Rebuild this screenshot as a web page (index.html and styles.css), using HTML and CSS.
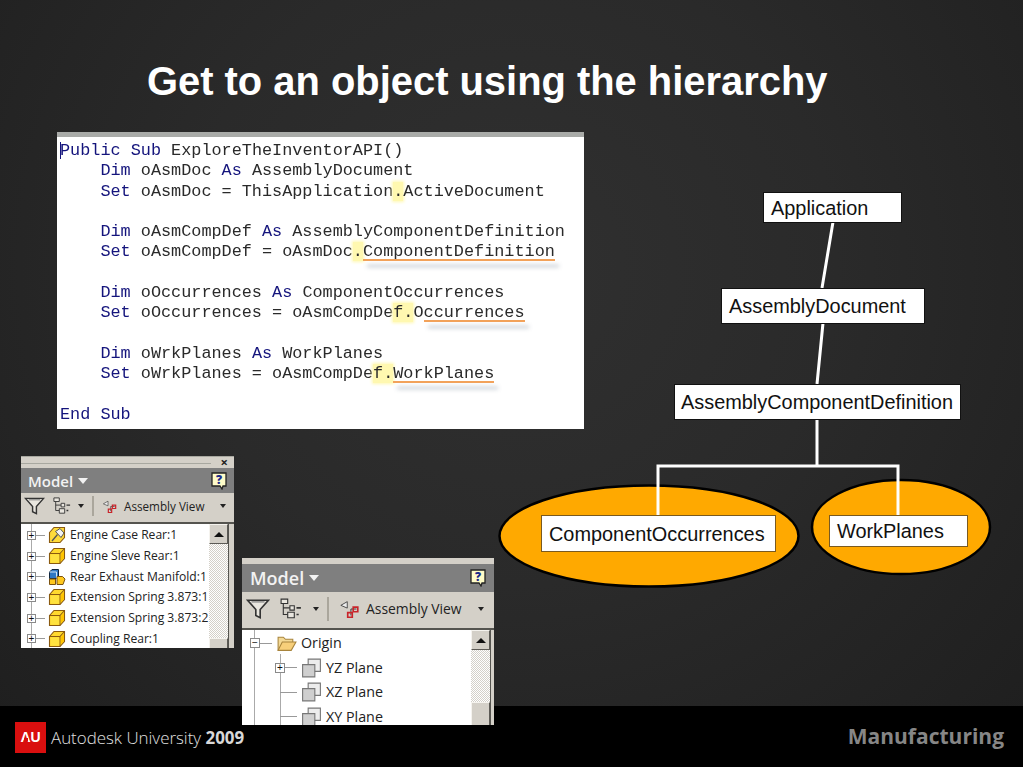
FILE: index.html

```html
<!DOCTYPE html>
<html lang="en">
<head>
    <meta charset="UTF-8">
    <meta name="viewport" content="width=device-width, initial-scale=1.0">
    <title>Get to an object using the hierarchy</title>
    <link rel="stylesheet" href="styles.css">
</head>
<body>
    <!-- Shared icons -->
    <svg class="icon-defs" width="0" height="0" aria-hidden="true">
        <symbol id="i-cube" viewBox="0 0 18 18">
            <path d="M1.500 6.500 6 1.500h10.500v10L12 16.500H1.500z" fill="#ffd92e" stroke="#8a5a10" stroke-width="1.100"/>
            <path d="M1.500 6.500H12v10M12 6.500l4.500-5" fill="none" stroke="#8a5a10" stroke-width="1.100"/>
            <path d="M2.500 7.500H11.200V15.600H2.500z" fill="#ffe23f"/>
            <path d="M12.800 7 16 3.400V11l-3.200 3.700z" fill="#ffc400"/>
        </symbol>
        <symbol id="i-pinned" viewBox="0 0 18 18">
            <path d="M1.500 6.500 6 1.500h10.500v10L12 16.500H1.500z" fill="#ffdb3a" stroke="#8a5a10" stroke-width="1.100"/>
            <path d="M4 15 9.500 8.500" stroke="#555" stroke-width="1.300"/>
            <path d="M7.500 5.500 12 2.500l4 4.500-3 4.500z" fill="#f2f2f2" stroke="#555" stroke-width="1"/>
        </symbol>
        <symbol id="i-assembly" viewBox="0 0 18 18">
            <path d="M1.500 4 4 1.500h6.500V8L8.500 10.500h-7z" fill="#2f78c4" stroke="#10263f"/>
            <path d="M1.500 4h7v6.500" fill="none" stroke="#cfe4f7"/>
            <path d="M1.500 11h6v5.500h-6zM9 8.500h5.500L17 11l-2 5.500H9z" fill="#ffc81e" stroke="#7a5210"/>
        </symbol>
        <symbol id="i-plane" viewBox="0 0 18 18">
            <path d="M6 1h11v11H6z" fill="#ececec" stroke="#777" stroke-width="1"/>
            <path d="M1 6h11v11H1z" fill="#cfcfcf" stroke="#777" stroke-width="1"/>
        </symbol>
        <symbol id="i-folder" viewBox="0 0 20 18">
            <path d="M2 16V3.500h5l2 2h7V8" fill="#f4d995" stroke="#a8843c"/>
            <path d="M2 16 6 8h13l-4.500 8z" fill="#f7cf7a" stroke="#a8843c"/>
        </symbol>
        <symbol id="i-funnel" viewBox="0 0 22 20">
            <path d="M1.500 2h19L13 10.500V18l-4-2v-5.500z" fill="#e9e6df" stroke="#333" stroke-width="1.500"/>
            <path d="M5 3.500h12" stroke="#888" stroke-width="1.200"/>
        </symbol>
        <symbol id="i-tree" viewBox="0 0 20 20">
            <path d="M3 5v10h4M3 9h6" fill="none" stroke="#333"/>
            <path d="M1 1h6v4H1zM9 7h4v4H9zM7 13h6v5H7z" fill="#e9e6df" stroke="#333"/>
            <path d="M15 9h4M15 15h2" stroke="#333" stroke-width="1.500"/>
        </symbol>
        <symbol id="i-view" viewBox="0 0 24 20">
            <path d="M9 2 2 6l7 3z" fill="#eee" stroke="#444"/>
            <path d="M13 10h6M13 10v7" fill="none" stroke="#333"/>
            <path d="M15.500 8h5v5h-5zM9.500 14h5v5h-5z" fill="none" stroke="#c9242a" stroke-width="1.800"/>
        </symbol>
        <symbol id="i-help" viewBox="0 0 16 18">
            <path d="M1 1h14v13h-3l-1 3-2-3H1z" fill="#fffcc8" stroke="#222" stroke-width="1.300"/>
        </symbol>
    </svg>

    <main class="slide">
        <h1 class="slide-title">Get to an object using the hierarchy</h1>

        <!-- VBA code window -->
        <section class="code-window">
            <div class="code-text">
                <div class="code-line"><span class="kw">Public Sub</span> ExploreTheInventorAPI()</div>
                <div class="code-line indent"><span class="kw">Dim</span> oAsmDoc <span class="kw">As</span> AssemblyDocument</div>
                <div class="code-line indent"><span class="kw">Set</span> oAsmDoc = ThisApplication<span class="hl">.</span>ActiveDocument</div>
                <div class="code-line"></div>
                <div class="code-line indent"><span class="kw">Dim</span> oAsmCompDef <span class="kw">As</span> AssemblyComponentDefinition</div>
                <div class="code-line indent"><span class="kw">Set</span> oAsmCompDef = oAsmDoc<span class="hl">.</span><span class="under">ComponentDefinition</span></div>
                <div class="code-line"></div>
                <div class="code-line indent"><span class="kw">Dim</span> oOccurrences <span class="kw">As</span> ComponentOccurrences</div>
                <div class="code-line indent"><span class="kw">Set</span> oOccurrences = oAsmCompDe<span class="hl">f.</span>O<span class="under">ccurrences</span></div>
                <div class="code-line"></div>
                <div class="code-line indent"><span class="kw">Dim</span> oWrkPlanes <span class="kw">As</span> WorkPlanes</div>
                <div class="code-line indent"><span class="kw">Set</span> oWrkPlanes = oAsmCompDe<span class="hl">f.</span><span class="under">WorkPlanes</span></div>
                <div class="code-line"></div>
                <div class="code-line"><span class="kw">End Sub</span></div>
            </div>
        </section>

        <!-- Model browser, small -->
        <section class="browser browser-small">
            <div class="browser-strip"><span class="browser-close">×</span></div>
            <div class="browser-head">
                <span class="browser-name">Model <i class="caret-white"></i></span>
                <span class="help"><svg><use href="#i-help"/></svg><b>?</b></span>
            </div>
            <div class="browser-tools">
                <svg class="tool-funnel"><use href="#i-funnel"/></svg>
                <svg class="tool-tree"><use href="#i-tree"/></svg>
                <i class="caret-dark"></i>
                <span class="tool-sep"></span>
                <svg class="tool-view"><use href="#i-view"/></svg>
                <span class="tool-label">Assembly View</span>
                <i class="caret-dark"></i>
            </div>
            <div class="browser-body">
                <ul class="tree">
                    <li><span class="exp">+</span><span class="dash"></span><svg class="node-icon"><use href="#i-pinned"/></svg>Engine Case Rear:1</li>
                    <li><span class="exp">+</span><span class="dash"></span><svg class="node-icon"><use href="#i-cube"/></svg>Engine Sleve Rear:1</li>
                    <li><span class="exp">+</span><span class="dash"></span><svg class="node-icon"><use href="#i-assembly"/></svg>Rear Exhaust Manifold:1</li>
                    <li><span class="exp">+</span><span class="dash"></span><svg class="node-icon"><use href="#i-cube"/></svg>Extension Spring 3.873:1</li>
                    <li><span class="exp">+</span><span class="dash"></span><svg class="node-icon"><use href="#i-cube"/></svg>Extension Spring 3.873:2</li>
                    <li><span class="exp">+</span><span class="dash"></span><svg class="node-icon"><use href="#i-cube"/></svg>Coupling Rear:1</li>
                </ul>
                <div class="scrollbar">
                    <span class="scroll-btn"><i class="arrow-up"></i></span>
                    <span class="scroll-track"></span>
                    <span class="scroll-thumb"></span>
                </div>
            </div>
        </section>

        <!-- Model browser, large -->
        <section class="browser browser-large">
            <div class="browser-head">
                <span class="browser-name">Model <i class="caret-white"></i></span>
                <span class="help"><svg><use href="#i-help"/></svg><b>?</b></span>
            </div>
            <div class="browser-tools">
                <svg class="tool-funnel"><use href="#i-funnel"/></svg>
                <svg class="tool-tree"><use href="#i-tree"/></svg>
                <i class="caret-dark"></i>
                <span class="tool-sep"></span>
                <svg class="tool-view"><use href="#i-view"/></svg>
                <span class="tool-label">Assembly View</span>
                <i class="caret-dark"></i>
            </div>
            <div class="browser-body">
                <ul class="tree">
                    <li><span class="exp">−</span><span class="dash"></span><svg class="node-icon"><use href="#i-folder"/></svg>Origin</li>
                    <li class="child"><span class="exp">+</span><span class="dash"></span><svg class="node-icon"><use href="#i-plane"/></svg>YZ Plane</li>
                    <li class="child leaf"><span class="dash"></span><svg class="node-icon"><use href="#i-plane"/></svg>XZ Plane</li>
                    <li class="child leaf"><span class="dash"></span><svg class="node-icon"><use href="#i-plane"/></svg>XY Plane</li>
                </ul>
                <div class="scrollbar">
                    <span class="scroll-btn"><i class="arrow-up"></i></span>
                    <span class="scroll-track"></span>
                    <span class="scroll-thumb"></span>
                </div>
            </div>
        </section>

        <!-- Object hierarchy diagram -->
        <svg class="links" width="1023" height="767" aria-hidden="true">
            <ellipse cx="649" cy="536" rx="149.500" ry="50.500" fill="#ffa900" stroke="#000" stroke-width="2.500"/>
            <ellipse cx="901" cy="527" rx="89" ry="47" fill="#ffa900" stroke="#000" stroke-width="2.500"/>
            <path d="M833 222 822 288M823 323 817 384M817 419V466M658 515V466H898V515" fill="none" stroke="#fff" stroke-width="3"/>
        </svg>
        <div class="node node-app">Application</div>
        <div class="node node-doc">AssemblyDocument</div>
        <div class="node node-def">AssemblyComponentDefinition</div>
        <div class="node node-occ">ComponentOccurrences</div>
        <div class="node node-wrk">WorkPlanes</div>

        <!-- Footer band -->
        <footer class="slide-footer">
            <div class="brand">
                <span class="au-logo">AU</span>
                <span class="brand-name">Autodesk University <b>2009</b></span>
            </div>
            <span class="industry">Manufacturing</span>
        </footer>
    </main>
</body>
</html>
```

FILE: styles.css

```css
/* General Reset */
* {
    margin: 0;
    padding: 0;
    box-sizing: border-box;
}

body {
    background-color: #000;
    font-family: "Liberation Sans", Arial, sans-serif;
}

.icon-defs {
    position: absolute;
}

/* Slide */
.slide {
    position: relative;
    width: 1023px;
    height: 767px;
    overflow: hidden;
    display: flex;
    flex-direction: column;
    justify-content: space-between;
    background: radial-gradient(ellipse at 50% 35%, #303030 0%, #2a2a2a 45%, #1e1e1e 100%);
}

.slide-title {
    padding: 57px 0 0 147px;
    color: #fff;
    font-size: 39.900px;
    line-height: 48px;
    font-weight: bold;
}

/* Code window */
.code-window {
    position: absolute;
    left: 57px;
    top: 132px;
    width: 527px;
    height: 297px;
    background-color: #fff;
    border-top: 5px solid #a9aba8;
    padding: 4px 0 0 3px;
}

.code-text {
    position: relative;
    font-family: "Liberation Mono", "Courier New", monospace;
    font-size: 16.830px;
    line-height: 20.300px;
    color: #2a2a2a;
    filter: blur(0.4px);
}

.code-line {
    height: 20.300px;
    white-space: pre;
}

.code-line.indent {
    padding-left: 40.400px;
}

/* text cursor in front of the first line */
.code-text::before {
    content: "";
    position: absolute;
    left: 0;
    top: 1px;
    width: 1px;
    height: 17px;
    background-color: #14147c;
}

.kw {
    color: #14147c;
}

.hl {
    background-color: #fff8b0;
    box-shadow: 0 0 3px 1px #fff8b0;
}

.under {
    position: relative;
}

.under::after {
    content: "";
    position: absolute;
    left: 0;
    right: 0;
    bottom: 0;
    height: 2px;
    background-color: #f2a25a;
    box-shadow: 4px 6px 4px rgba(90, 110, 130, 0.45);
}

/* Model browser panels */
.browser {
    position: absolute;
    display: flex;
    flex-direction: column;
    background-color: #d4d0c8;
    font-family: "Open Sans", "Noto Sans", sans-serif;
    color: #222;
}

.browser-small {
    left: 21px;
    top: 456px;
    width: 213px;
    height: 192px;
}

.browser-large {
    left: 242px;
    top: 558px;
    width: 252px;
    height: 167px;
    padding-top: 6px;
}

.browser-strip {
    height: 12px;
    display: flex;
    justify-content: flex-end;
    background: linear-gradient(#a8a8a0, #a8a8a0) 0 6px / 190px 1px no-repeat;
    border-top: 1px solid #a8a8a0;
}

.browser-close {
    font-size: 13px;
    line-height: 11px;
    font-weight: bold;
    padding-right: 6px;
}

.browser-head {
    display: flex;
    align-items: center;
    justify-content: space-between;
    background-color: #7f7f7f;
    color: #f2f2f2;
}

.browser-small .browser-head {
    height: 25px;
    padding: 0 7px;
    font-size: 15px;
    font-weight: 600;
}

.browser-large .browser-head {
    height: 28px;
    padding: 0 8px;
    font-size: 18px;
    font-weight: 600;
}

.browser-name {
    display: flex;
    align-items: center;
    gap: 5px;
}

.caret-white {
    width: 0;
    height: 0;
    border: 5px solid transparent;
    border-top: 6px solid #f2f2f2;
    border-bottom: 0;
}

.help {
    position: relative;
    width: 16px;
    height: 18px;
    color: #1a2a8a;
    font-size: 12px;
    text-align: center;
    line-height: 15px;
}

.help svg {
    position: absolute;
    left: 0;
    top: 0;
    width: 16px;
    height: 18px;
}

.help b {
    position: relative;
}

.browser-tools {
    display: flex;
    align-items: center;
    border-bottom: 2px solid #55544f;
}

.browser-small .browser-tools {
    height: 31px;
    padding: 0 8px 3px 3px;
    font-size: 11.700px;
}

.browser-large .browser-tools {
    height: 38px;
    padding: 0 10px 3px 4px;
    font-size: 13.900px;
}

.browser-tools svg {
    flex: none;
}

.tool-funnel {
    width: 24px;
    height: 22px;
}

.browser-small .tool-funnel {
    width: 21px;
    height: 20px;
}

.tool-tree {
    width: 22px;
    height: 22px;
    margin-left: 10px;
}

.browser-small .tool-tree {
    width: 18px;
    height: 18px;
    margin-left: 8px;
}

.caret-dark {
    flex: none;
    width: 0;
    height: 0;
    margin-left: 11px;
    border: 3.500px solid transparent;
    border-top: 4px solid #222;
    border-bottom: 0;
}

.browser-small .caret-dark {
    margin-left: 7px;
}

.tool-sep {
    width: 2px;
    height: 24px;
    margin: 0 10px 0 8px;
    background-color: #aaa69c;
}

.browser-small .tool-sep {
    height: 20px;
    margin: 0 8px;
}

.tool-view {
    width: 22px;
    height: 20px;
}

.browser-small .tool-view {
    width: 16px;
    height: 15px;
}

.tool-label {
    margin-left: 5px;
    flex: 1;
    white-space: nowrap;
}

.browser-small .tool-label {
    margin-left: 6px;
}

/* Tree list */
.browser-body {
    flex: 1;
    min-height: 0;
    display: flex;
    background-color: #fff;
    overflow: hidden;
}

.browser-small .browser-body {
    margin-right: 5px;
    border-right: 1px solid #55544f;
}

.browser-large .browser-body {
    margin-right: 3px;
    border-right: 1px solid #55544f;
}

.tree {
    flex: 1;
    min-width: 0;
    list-style: none;
}

.tree li {
    display: flex;
    align-items: center;
    white-space: nowrap;
    line-height: 16px;
}

.browser-small .tree {
    padding: 1px 0 0 6px;
    font-size: 12.100px;
    background: linear-gradient(#aaa, #aaa) 10px 0 / 1px 100% no-repeat;
}

.browser-small .tree li {
    height: 20.700px;
}

.browser-large .tree {
    padding: 1px 0 0 8px;
    font-size: 14.300px;
    background:
        linear-gradient(#aaa, #aaa) 12px 0 / 1px 100% no-repeat,
        linear-gradient(#aaa, #aaa) 38px 24px / 1px 100% no-repeat;
}

.browser-large .tree li {
    height: 24.500px;
}

.browser-large .tree .child {
    padding-left: 25px;
}

.browser-large .tree .leaf {
    padding-left: 30px;
}

.exp {
    flex: none;
    width: 9px;
    height: 9px;
    border: 1px solid #8a8a8a;
    background-color: #fff;
    font-family: "Liberation Sans", sans-serif;
    font-size: 10px;
    line-height: 7px;
    text-align: center;
    color: #111;
}

.browser-large .exp {
    width: 10px;
    height: 10px;
    line-height: 8px;
}

.dash {
    flex: none;
    width: 9px;
    border-top: 1px solid #999;
    margin-right: 3px;
}

.browser-large .dash {
    width: 12px;
    margin-right: 4px;
}

.browser-large .leaf .dash {
    width: 17px;
}

.node-icon {
    flex: none;
    width: 18px;
    height: 18px;
    margin-right: 4px;
}

.browser-large .node-icon {
    width: 21px;
    height: 20px;
}

/* Scrollbar */
.scrollbar {
    flex: none;
    width: 19px;
    display: flex;
    flex-direction: column;
    background: repeating-conic-gradient(#d4d0c8 0 25%, #fff 0 50%) 0 0 / 2px 2px;
}

.scroll-btn,
.scroll-thumb {
    flex: none;
    background-color: #d4d0c8;
    border: 1px solid;
    border-color: #f5f3ee #5c5a55 #5c5a55 #f5f3ee;
}

.scroll-btn {
    height: 20px;
    display: flex;
    align-items: center;
    justify-content: center;
}

.scroll-track {
    flex: 1;
}

.scroll-thumb {
    height: 31px;
    margin-bottom: -8px;
}

.browser-small .scroll-thumb {
    height: 27px;
    margin-bottom: -17px;
}

.arrow-up {
    width: 0;
    height: 0;
    border: 5px solid transparent;
    border-bottom: 5px solid #111;
    border-top: 0;
}

/* Hierarchy diagram */
.links {
    position: absolute;
    left: 0;
    top: 0;
}

.node {
    position: absolute;
    display: flex;
    align-items: center;
    background-color: #fff;
    color: #111;
    font-size: 19.900px;
    white-space: nowrap;
    border: 1px solid #111;
    padding-left: 6px;
}

.node-app {
    left: 763px;
    top: 192px;
    width: 139px;
    height: 31px;
    padding: 2px 0 0 7px;
}

.node-doc {
    left: 721px;
    top: 288px;
    width: 204px;
    height: 36px;
    padding-left: 7px;
}

.node-def {
    left: 674px;
    top: 384px;
    width: 287px;
    height: 36px;
}

.node-occ {
    left: 541px;
    top: 515px;
    width: 235px;
    height: 37px;
    padding: 2px 0 0 7px;
    border-color: #7a5a20;
}

.node-wrk {
    left: 829px;
    top: 515px;
    width: 139px;
    height: 32px;
    padding-left: 7px;
    border-color: #7a5a20;
}

/* Footer band */
.slide-footer {
    height: 61px;
    background-color: #000;
    display: flex;
    align-items: center;
    justify-content: space-between;
    padding: 0 19px 0 15px;
}

.brand {
    display: flex;
    align-items: center;
    gap: 5px;
    margin-top: 2px;
}

.au-logo {
    position: relative;
    width: 31px;
    height: 31px;
    background-color: #d90f0f;
    color: #fff;
    font-size: 14px;
    font-weight: bold;
    line-height: 31px;
    text-align: center;
}

/* the logo's A has no crossbar */
.au-logo::after {
    content: "";
    position: absolute;
    left: 8.500px;
    top: 16px;
    width: 4px;
    height: 3px;
    background-color: #d90f0f;
}

.brand-name {
    font-family: "Open Sans", "Noto Sans", sans-serif;
    font-size: 16.900px;
    font-weight: 300;
    color: #e0e0e0;
}

.brand-name b {
    font-weight: bold;
    color: #d8d8d8;
}

.industry {
    font-family: "Open Sans", "Noto Sans", sans-serif;
    font-size: 21px;
    font-weight: bold;
    color: #868686;
    margin-top: -2px;
}
```
